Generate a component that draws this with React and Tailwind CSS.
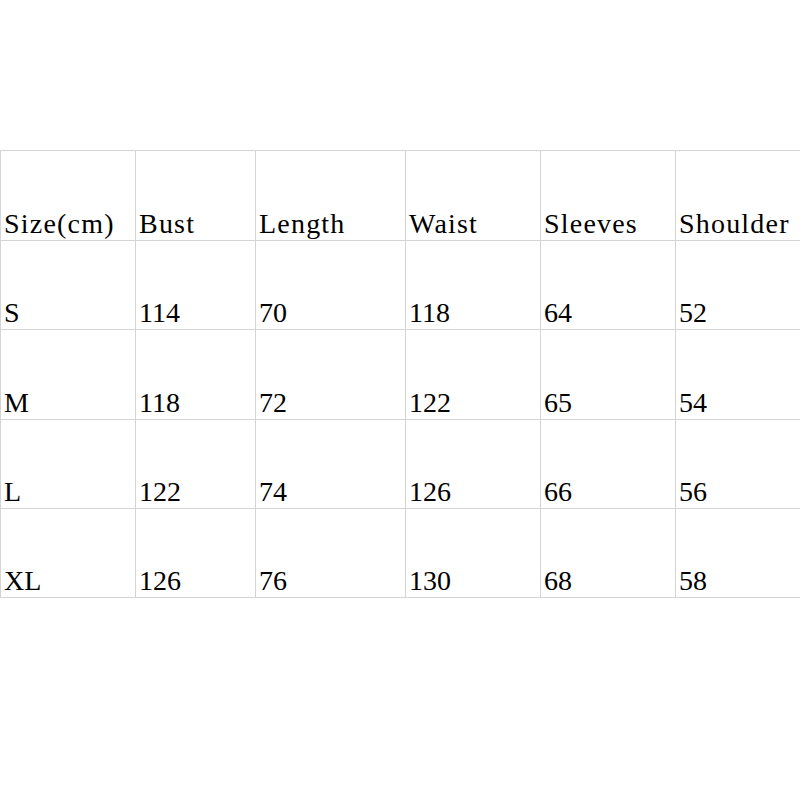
import React from 'react';

const headers = ['Size(cm)', 'Bust', 'Length', 'Waist', 'Sleeves', 'Shoulder'];
const rows = [
    ['S', '114', '70', '118', '64', '52'],
    ['M', '118', '72', '122', '65', '54'],
    ['L', '122', '74', '126', '66', '56'],
    ['XL', '126', '76', '130', '68', '58'],
];
const rowHeights = ['h-[90px]', 'h-[89px]', 'h-[90px]', 'h-[89px]', 'h-[89px]'];

const Cell = ({ children, last, header, h }) => (
    <div
        className={`${h} flex items-end pl-[3px] pb-[2px] border-b border-[#d4d4d4] ${last ? '' : 'border-r'} ${header ? 'tracking-[1.2px]' : ''}`}
    >
        <span className="leading-none">{children}</span>
    </div>
);

const App = () => {
    const all = [headers, ...rows];
    return (
        <div className="w-[800px] h-[800px] bg-white pt-[150px] text-black text-[28px]" style={{ fontFamily: '"Liberation Serif", "Noto Sans CJK SC", serif' }}>
            <div className="grid grid-cols-[135px_120px_150px_135px_135px_125px] border-t border-l border-[#d4d4d4]">
                {all.map((row, ri) =>
                    row.map((v, ci) => (
                        <Cell key={`${ri}-${ci}`} h={rowHeights[ri]} last={ci === row.length - 1} header={ri === 0}>
                            {v}
                        </Cell>
                    ))
                )}
            </div>
        </div>
    );
};

export default App;
